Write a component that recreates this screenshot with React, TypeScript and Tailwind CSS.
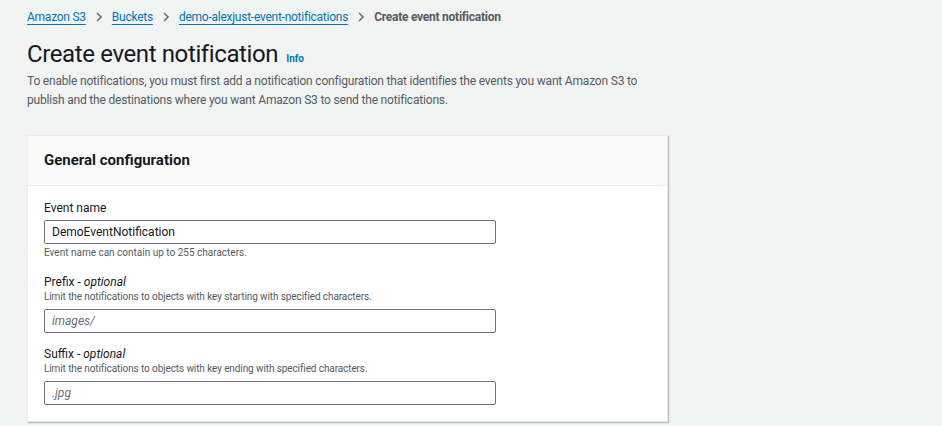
import React from 'react'

const font = { fontFamily: 'Roboto, "Open Sans", sans-serif' }

const Chevron = () => (
  <svg width="8" height="10" viewBox="0 0 8 10" className="mx-[9px] shrink-0">
    <path d="M2 1l4 4-4 4" fill="none" stroke="#687078" strokeWidth="1.6" />
  </svg>
)

const Field = ({
  label,
  optional,
  desc,
  value,
  placeholder,
  help,
}: {
  label: string
  optional?: boolean
  desc?: string
  value?: string
  placeholder?: string
  help?: string
}) => (
  <div className="flex flex-col">
    <label className="text-[12px] leading-[16px] text-[#16191f]">
      {label}
      {optional && (
        <>
          {' - '}
          <i>optional</i>
        </>
      )}
    </label>
    {desc && <div className="text-[10px] leading-[14px] tracking-[-0.1px] text-[#545b64]">{desc}</div>}
    <input
      readOnly
      defaultValue={value}
      placeholder={placeholder}
      className={`${desc ? 'mt-[5px]' : 'mt-[4px]'} h-[24px] w-[452px] rounded-[2px] border border-[#6b7480] bg-white px-[7px] text-[12px] text-[#16191f] outline-none placeholder:italic placeholder:text-[#687078]`}
      style={font}
    />
    {help && <div className="mt-[2px] text-[10px] leading-[14px] text-[#545b64]">{help}</div>}
  </div>
)

export default function App() {
  return (
    <div className="min-h-screen w-full bg-[#f2f3f3] pl-[27px] pt-[8px]" style={font}>
      <nav className="flex h-[18px] items-center text-[12px] tracking-[-0.25px]">
        <a className="text-[#0073bb] underline underline-offset-[3px]" href="#">Amazon S3</a>
        <Chevron />
        <a className="text-[#0073bb] underline underline-offset-[3px]" href="#">Buckets</a>
        <Chevron />
        <a className="text-[#0073bb] underline underline-offset-[3px]" href="#">demo-alexjust-event-notifications</a>
        <Chevron />
        <span className="font-bold text-[#545b64]">Create event notification</span>
      </nav>

      <div className="mt-[13px] flex items-baseline">
        <h1 className="text-[24px] leading-[30px] font-normal tracking-[-0.38px] text-[#16191f]">Create event notification</h1>
        <a href="#" className="ml-[8px] text-[10px] font-bold text-[#0073bb]">Info</a>
      </div>
      <p className="mt-[3px] w-[641px] text-[12px] leading-[19px] tracking-[-0.19px] text-[#545b64]">
        To enable notifications, you must first add a notification configuration that identifies the events you want Amazon S3 to
        publish and the destinations where you want Amazon S3 to send the notifications.
      </p>

      <section className="mt-[25px] w-[641px] border border-[#eaeded] bg-white shadow-[1px_1px_1px_0_rgba(0,28,36,0.25)]">
        <div className="flex h-[50px] items-center border-b border-[#eaeded] bg-[#fafafa] px-[16px]">
          <h2 className="text-[15px] font-bold text-[#16191f]">General configuration</h2>
        </div>
        <div className="flex flex-col px-[16px] pt-[14px] pb-[16px]">
          <Field label="Event name" value="DemoEventNotification" help="Event name can contain up to 255 characters." />
          <div className="mt-[14px]">
            <Field
              label="Prefix"
              optional
              desc="Limit the notifications to objects with key starting with specified characters."
              placeholder="images/"
            />
          </div>
          <div className="mt-[13px]">
            <Field
              label="Suffix"
              optional
              desc="Limit the notifications to objects with key ending with specified characters."
              placeholder=".jpg"
            />
          </div>
        </div>
      </section>
    </div>
  )
}
